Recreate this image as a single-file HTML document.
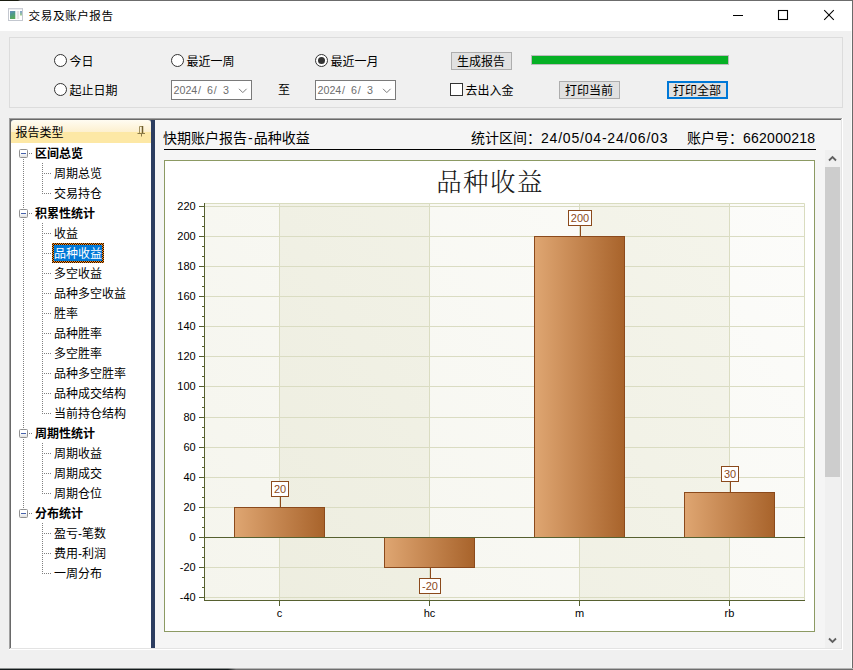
<!DOCTYPE html>
<html lang="zh-CN">
<head>
<meta charset="utf-8">
<title>交易及账户报告</title>
<style>
*{box-sizing:border-box;margin:0;padding:0}
html,body{width:853px;height:670px;overflow:hidden}
body{position:relative;background:#f0f0f0;font-family:"Liberation Sans","Noto Sans CJK SC",sans-serif;font-size:12px;color:#000;line-height:1}
.abs{position:absolute}
.t{position:absolute;white-space:nowrap;line-height:16px;height:16px}
#titlebar{left:0;top:0;width:853px;height:31px;background:#fff}
#topline{left:0;top:0;width:853px;height:1px;background:linear-gradient(90deg,#1a1c10 0,#1a1c10 18px,#6c6c6c 20px,#6c6c6c 100%)}
#rightline{left:852px;top:0;width:1px;height:670px;background:#6a6a6a}
#botline{left:0;top:668px;width:853px;height:2px;background:linear-gradient(90deg,#151b1c 0,#151b1c 228px,#6e6e6e 236px,#6e6e6e 100%)}
#botline::before{content:"";position:absolute;left:0;top:0;width:853px;height:1px;background:rgba(240,240,240,.55)}
#group{left:9px;top:37px;width:834px;height:71px;border:1px solid #dcdcdc}
.radio{position:absolute;width:13px;height:13px;border:1px solid #333;border-radius:50%;background:#fff}
.radio.on::after{content:"";position:absolute;left:2px;top:2px;width:7px;height:7px;border-radius:50%;background:#333}
.date{position:absolute;width:81px;height:20px;border:1px solid #7a7a7a;background:#fff;color:#6d6d6d}
.date i{font-style:normal;margin:0 0.65px}
.btn{position:absolute;height:18px;width:61px;background:#e1e1e1;border:1px solid #adadad;text-align:center;line-height:19px;white-space:nowrap;padding-right:1px;overflow:hidden}
.node{position:absolute;white-space:nowrap;line-height:16px;height:16px}
.b{font-weight:bold}
.box{position:absolute;width:9px;height:9px;border:1px solid #919191;border-radius:1.5px;background:linear-gradient(#fff 0,#fff 45%,#dedede 100%)}
.box::after{content:"";position:absolute;left:1px;top:3px;width:5px;height:1px;background:#4560aa}
.hd{position:absolute;height:1px;background:repeating-linear-gradient(90deg,#808080 0,#808080 1px,transparent 1px,transparent 2px)}
.vd{position:absolute;width:1px;background:repeating-linear-gradient(180deg,#808080 0,#808080 1px,transparent 1px,transparent 2px)}
</style>
</head>
<body>
<!-- title bar -->
<div id="titlebar" class="abs"></div>
<div id="topline" class="abs"></div>
<svg class="abs" style="left:8px;top:8px" width="15" height="13" viewBox="0 0 15 13">
  <defs><linearGradient id="ig" x1="0" y1="0" x2="0.3" y2="1"><stop offset="0" stop-color="#6a8cc4"/><stop offset="0.45" stop-color="#4d9a8c"/><stop offset="1" stop-color="#58a85a"/></linearGradient>
  <linearGradient id="ig2" x1="0" y1="0" x2="0" y2="1"><stop offset="0" stop-color="#7fa0d0"/><stop offset="1" stop-color="#9fd08c"/></linearGradient></defs>
  <rect x="0.5" y="0.5" width="14" height="12" fill="#fff" stroke="#c3c7cf"/>
  <rect x="0.5" y="0.5" width="14" height="1" fill="#d9dce2"/>
  <rect x="2" y="3" width="5.3" height="8" fill="url(#ig)"/>
  <rect x="8.7" y="3" width="2.5" height="8" fill="#e4e4e4"/>
  <rect x="12" y="3" width="2" height="4.5" fill="url(#ig2)"/>
</svg>
<div class="t" style="left:28.6px;top:8px;font-size:11.6px;letter-spacing:0.55px">交易及账户报告</div>
<svg class="abs" style="left:728px;top:5px" width="112" height="20" viewBox="0 0 112 20">
  <path d="M5 10.5H15" stroke="#000" stroke-width="1" fill="none"/>
  <rect x="50.5" y="5.5" width="9" height="9" stroke="#000" stroke-width="1.1" fill="none"/>
  <path d="M96.2 5.2L105.8 14.8M105.8 5.2L96.2 14.8" stroke="#000" stroke-width="1.05" fill="none"/>
</svg>

<!-- options group -->
<div id="group" class="abs"></div>
<div class="radio" style="left:54px;top:54px"></div>
<div class="t" style="left:69.5px;top:54px">今日</div>
<div class="radio" style="left:54px;top:83px"></div>
<div class="t" style="left:69.5px;top:83px">起止日期</div>
<div class="radio" style="left:171px;top:54px"></div>
<div class="t" style="left:186.5px;top:54px">最近一周</div>
<div class="radio on" style="left:315px;top:54px"></div>
<div class="t" style="left:330.5px;top:54px">最近一月</div>

<div class="date" style="left:171px;top:80px"><span class="t" style="left:1.5px;top:1px;white-space:pre;font-size:10.7px;word-spacing:2.6px">2024<i>/</i> 6<i>/</i> 3</span>
  <svg class="abs" style="left:66px;top:7px" width="10" height="6" viewBox="0 0 10 6"><path d="M1 0.8L4.8 4.6L8.6 0.8" stroke="#7a7a7a" stroke-width="1" fill="none"/></svg>
</div>
<div class="t" style="left:278px;top:81.5px">至</div>
<div class="date" style="left:315px;top:80px"><span class="t" style="left:1.5px;top:1px;white-space:pre;font-size:10.7px;word-spacing:2.6px">2024<i>/</i> 6<i>/</i> 3</span>
  <svg class="abs" style="left:66px;top:7px" width="10" height="6" viewBox="0 0 10 6"><path d="M1 0.8L4.8 4.6L8.6 0.8" stroke="#7a7a7a" stroke-width="1" fill="none"/></svg>
</div>

<div class="btn" style="left:451px;top:52px">生成报告</div>
<div class="abs" style="left:531px;top:55px;width:198px;height:10px;background:#06b025;border:1px solid #bcbcbc"></div>
<div class="abs" style="left:450px;top:83px;width:13px;height:13px;background:#fff;border:1px solid #333"></div>
<div class="t" style="left:465.5px;top:83px">去出入金</div>
<div class="btn" style="left:559px;top:81px">打印当前</div>
<div class="btn" style="left:667px;top:81px;border:2px solid #0078d7;line-height:17px">打印全部</div>

<!-- main sunken frame -->
<div class="abs" style="left:9px;top:118px;width:833px;height:1px;background:#a0a0a0"></div>
<div class="abs" style="left:9px;top:118px;width:1px;height:531px;background:#a0a0a0"></div>
<div class="abs" style="left:10px;top:119px;width:831px;height:1px;background:#696969"></div>
<div class="abs" style="left:10px;top:119px;width:1px;height:530px;background:#696969"></div>
<div class="abs" style="left:842px;top:118px;width:1px;height:532px;background:#fff"></div>
<div class="abs" style="left:9px;top:649px;width:834px;height:1px;background:#fff"></div>
<div class="abs" style="left:841px;top:119px;width:1px;height:530px;background:#e3e3e3"></div>
<div class="abs" style="left:10px;top:648px;width:832px;height:1px;background:#e3e3e3"></div>

<!-- left tree panel -->
<div class="abs" style="left:11px;top:120px;width:140px;height:528px;background:#fff"></div>
<div class="abs" style="left:11px;top:120px;width:140px;height:4px;background:#636b7c"></div>
<div class="abs" style="left:11px;top:120px;width:140px;height:23px;border-radius:3px 3px 0 0;background:linear-gradient(#fffcf2 0,#fdf0cf 12px,#fde8a5 12px,#fde8a5 100%)"></div>
<div class="t" style="left:15.5px;top:125px">报告类型</div>
<svg class="abs" style="left:137px;top:125.5px" width="8" height="11" viewBox="0 0 8 11"><path d="M2.5 7V0.5H5.5" stroke="#a39260" stroke-width="1" fill="none"/><path d="M5.5 0V7" stroke="#6f5d2c" stroke-width="1.5" fill="none"/><path d="M0.5 7.5H8M4.5 8V10.5" stroke="#8c7b48" stroke-width="1" fill="none"/></svg>
<div id="tree">
<div class="vd" style="left:23px;top:159px;height:350px"></div>
<div class="box" style="left:19px;top:149px"></div>
<div class="hd" style="left:29px;top:153px;width:3px"></div>
<div class="node b" style="left:35px;top:146px">区间总览</div>
<div class="vd" style="left:42px;top:163px;height:31px"></div>
<div class="hd" style="left:42px;top:173px;width:9px"></div>
<div class="node" style="left:54px;top:166px">周期总览</div>
<div class="hd" style="left:42px;top:193px;width:9px"></div>
<div class="node" style="left:54px;top:186px">交易持仓</div>
<div class="box" style="left:19px;top:209px"></div>
<div class="hd" style="left:29px;top:213px;width:3px"></div>
<div class="node b" style="left:35px;top:206px">积累性统计</div>
<div class="vd" style="left:42px;top:223px;height:191px"></div>
<div class="hd" style="left:42px;top:233px;width:9px"></div>
<div class="node" style="left:54px;top:226px">收益</div>
<div class="hd" style="left:42px;top:253px;width:9px"></div>
<div class="abs" style="left:52px;top:243px;width:52px;height:20px;background:repeating-conic-gradient(#1a1208 0 25%,#ff8a1c 0 50%) 0 0/2px 2px"></div>
<div class="abs" style="left:54px;top:245px;width:48px;height:16px;background:#0078d7"></div>
<div class="node" style="left:54px;top:246px;color:#fff">品种收益</div>
<div class="hd" style="left:42px;top:273px;width:9px"></div>
<div class="node" style="left:54px;top:266px">多空收益</div>
<div class="hd" style="left:42px;top:293px;width:9px"></div>
<div class="node" style="left:54px;top:286px">品种多空收益</div>
<div class="hd" style="left:42px;top:313px;width:9px"></div>
<div class="node" style="left:54px;top:306px">胜率</div>
<div class="hd" style="left:42px;top:333px;width:9px"></div>
<div class="node" style="left:54px;top:326px">品种胜率</div>
<div class="hd" style="left:42px;top:353px;width:9px"></div>
<div class="node" style="left:54px;top:346px">多空胜率</div>
<div class="hd" style="left:42px;top:373px;width:9px"></div>
<div class="node" style="left:54px;top:366px">品种多空胜率</div>
<div class="hd" style="left:42px;top:393px;width:9px"></div>
<div class="node" style="left:54px;top:386px">品种成交结构</div>
<div class="hd" style="left:42px;top:413px;width:9px"></div>
<div class="node" style="left:54px;top:406px">当前持仓结构</div>
<div class="box" style="left:19px;top:429px"></div>
<div class="hd" style="left:29px;top:433px;width:3px"></div>
<div class="node b" style="left:35px;top:426px">周期性统计</div>
<div class="vd" style="left:42px;top:443px;height:51px"></div>
<div class="hd" style="left:42px;top:453px;width:9px"></div>
<div class="node" style="left:54px;top:446px">周期收益</div>
<div class="hd" style="left:42px;top:473px;width:9px"></div>
<div class="node" style="left:54px;top:466px">周期成交</div>
<div class="hd" style="left:42px;top:493px;width:9px"></div>
<div class="node" style="left:54px;top:486px">周期仓位</div>
<div class="box" style="left:19px;top:509px"></div>
<div class="hd" style="left:29px;top:513px;width:3px"></div>
<div class="node b" style="left:35px;top:506px">分布统计</div>
<div class="vd" style="left:42px;top:523px;height:51px"></div>
<div class="hd" style="left:42px;top:533px;width:9px"></div>
<div class="node" style="left:54px;top:526px">盈亏-笔数</div>
<div class="hd" style="left:42px;top:553px;width:9px"></div>
<div class="node" style="left:54px;top:546px">费用-利润</div>
<div class="hd" style="left:42px;top:573px;width:9px"></div>
<div class="node" style="left:54px;top:566px">一周分布</div>
</div><!--/tree-->

<!-- splitter -->
<div class="abs" style="left:151px;top:120px;width:4px;height:528px;background:#2c3d60"></div>

<!-- right panel -->
<div class="abs" style="left:155px;top:120px;width:686px;height:528px;background:#f5f5f5"></div>
<div class="t" style="left:163px;top:130px;font-size:14px">快期账户报告<span style="margin:0 1px">-</span>品种收益</div>
<div class="t" style="left:471px;top:130px;font-size:14px">统计区间：<span style="letter-spacing:0.8px">24/05/04-24/06/03</span></div>
<div class="t" style="left:687px;top:130px;font-size:14px">账户号：<span style="letter-spacing:0.25px">662000218</span></div>
<div class="abs" style="left:164px;top:149px;width:652px;height:1px;background:#000"></div>

<!-- scrollbar -->
<div class="abs" style="left:825px;top:150px;width:16px;height:498px;background:#f0f0f0"></div>
<div class="abs" style="left:825px;top:167px;width:15px;height:310px;background:#cdcdcd"></div>
<svg class="abs" style="left:828px;top:155px" width="9" height="7" viewBox="0 0 9 7"><path d="M1 5.5L4.5 2L8 5.5" stroke="#606060" stroke-width="1.8" fill="none"/></svg>
<svg class="abs" style="left:828px;top:637px" width="9" height="7" viewBox="0 0 9 7"><path d="M1 1.5L4.5 5L8 1.5" stroke="#606060" stroke-width="1.8" fill="none"/></svg>

<!-- chart -->
<svg class="abs" style="left:164px;top:160px" width="651" height="472" viewBox="164 160 651 472" font-family="'Liberation Sans',sans-serif" font-size="11">
  <defs>
    <linearGradient id="bar" x1="0" y1="0" x2="1" y2="0"><stop offset="0" stop-color="#dfa672"/><stop offset="1" stop-color="#a8632b"/></linearGradient>
    <linearGradient id="bg1" gradientUnits="userSpaceOnUse" x1="204" y1="600" x2="805" y2="203"><stop offset="0" stop-color="#f5f5ed"/><stop offset="1" stop-color="#fcfcfa"/></linearGradient>
    <linearGradient id="bg2" gradientUnits="userSpaceOnUse" x1="204" y1="600" x2="805" y2="203"><stop offset="0" stop-color="#ededdf"/><stop offset="1" stop-color="#f5f5ec"/></linearGradient>
  </defs>
  <rect x="164.5" y="160.5" width="650" height="471" fill="#fff" stroke="#8c9a63"/>
  <text x="490" y="191" text-anchor="middle" font-family="'Liberation Serif','Noto Serif CJK SC',serif" font-size="25.5" font-weight="300" letter-spacing="1.4" fill="#1a1a1a">品种收益</text>
  <g id="plot">
<rect x="204" y="203" width="75" height="397" fill="url(#bg1)"/>
<rect x="279" y="203" width="150" height="397" fill="url(#bg2)"/>
<rect x="429" y="203" width="150" height="397" fill="url(#bg1)"/>
<rect x="579" y="203" width="150" height="397" fill="url(#bg2)"/>
<rect x="729" y="203" width="76" height="397" fill="url(#bg1)"/>
<path d="M204 203.5H804.5V600" stroke="#d9dcbf" fill="none"/>
<path d="M204 597.5H805" stroke="#dadcc2"/>
<path d="M204 567.5H805" stroke="#dadcc2"/>
<path d="M204 507.5H805" stroke="#dadcc2"/>
<path d="M204 477.5H805" stroke="#dadcc2"/>
<path d="M204 447.5H805" stroke="#dadcc2"/>
<path d="M204 417.5H805" stroke="#dadcc2"/>
<path d="M204 386.5H805" stroke="#dadcc2"/>
<path d="M204 356.5H805" stroke="#dadcc2"/>
<path d="M204 326.5H805" stroke="#dadcc2"/>
<path d="M204 296.5H805" stroke="#dadcc2"/>
<path d="M204 266.5H805" stroke="#dadcc2"/>
<path d="M204 236.5H805" stroke="#dadcc2"/>
<path d="M204 206.5H805" stroke="#dadcc2"/>
<path d="M279.5 203V600" stroke="#dadcc2"/>
<path d="M429.5 203V600" stroke="#dadcc2"/>
<path d="M579.5 203V600" stroke="#dadcc2"/>
<path d="M729.5 203V600" stroke="#dadcc2"/>
<rect x="234.5" y="507.5" width="90" height="30" fill="url(#bar)" stroke="#8b4a1c"/>
<rect x="384.5" y="537.5" width="90" height="30" fill="url(#bar)" stroke="#8b4a1c"/>
<rect x="534.5" y="236.5" width="90" height="301" fill="url(#bar)" stroke="#8b4a1c"/>
<rect x="684.5" y="492.5" width="90" height="45" fill="url(#bar)" stroke="#8b4a1c"/>
<path d="M204 537.5H805" stroke="#56602f"/>
<path d="M280.5 507V497" stroke="#8b4a1c"/>
<rect x="271.5" y="481.5" width="17" height="15" fill="#fff" stroke="#8b4a1c"/>
<text x="280" y="493" text-anchor="middle" fill="#8b4a1c">20</text>
<path d="M430.5 567V578" stroke="#8b4a1c"/>
<rect x="419.5" y="578.5" width="21" height="15" fill="#fff" stroke="#8b4a1c"/>
<text x="430" y="590" text-anchor="middle" fill="#8b4a1c">-20</text>
<path d="M580.5 236V226" stroke="#8b4a1c"/>
<rect x="568.5" y="210.5" width="23" height="15" fill="#fff" stroke="#8b4a1c"/>
<text x="580" y="222" text-anchor="middle" fill="#8b4a1c">200</text>
<path d="M730.5 492V482" stroke="#8b4a1c"/>
<rect x="721.5" y="466.5" width="17" height="15" fill="#fff" stroke="#8b4a1c"/>
<text x="730" y="478" text-anchor="middle" fill="#8b4a1c">30</text>
<path d="M204.5 203V601M204 600.5H805" stroke="#56602f" fill="none"/>
<path d="M199 597.5H204" stroke="#56602f"/>
<text x="195.7" y="601.0" text-anchor="end" fill="#000">-40</text>
<path d="M202 587.5H204" stroke="#56602f"/>
<path d="M202 577.5H204" stroke="#56602f"/>
<path d="M199 567.5H204" stroke="#56602f"/>
<text x="195.7" y="571.0" text-anchor="end" fill="#000">-20</text>
<path d="M202 557.5H204" stroke="#56602f"/>
<path d="M202 547.5H204" stroke="#56602f"/>
<path d="M199 537.5H204" stroke="#56602f"/>
<text x="195.7" y="541.0" text-anchor="end" fill="#000">0</text>
<path d="M202 527.5H204" stroke="#56602f"/>
<path d="M202 517.5H204" stroke="#56602f"/>
<path d="M199 507.5H204" stroke="#56602f"/>
<text x="195.7" y="511.0" text-anchor="end" fill="#000">20</text>
<path d="M202 497.5H204" stroke="#56602f"/>
<path d="M202 487.5H204" stroke="#56602f"/>
<path d="M199 477.5H204" stroke="#56602f"/>
<text x="195.7" y="481.0" text-anchor="end" fill="#000">40</text>
<path d="M202 467.5H204" stroke="#56602f"/>
<path d="M202 457.5H204" stroke="#56602f"/>
<path d="M199 447.5H204" stroke="#56602f"/>
<text x="195.7" y="451.0" text-anchor="end" fill="#000">60</text>
<path d="M202 437.5H204" stroke="#56602f"/>
<path d="M202 427.5H204" stroke="#56602f"/>
<path d="M199 417.5H204" stroke="#56602f"/>
<text x="195.7" y="421.0" text-anchor="end" fill="#000">80</text>
<path d="M202 407.5H204" stroke="#56602f"/>
<path d="M202 397.5H204" stroke="#56602f"/>
<path d="M199 386.5H204" stroke="#56602f"/>
<text x="195.7" y="390.0" text-anchor="end" fill="#000">100</text>
<path d="M202 376.5H204" stroke="#56602f"/>
<path d="M202 366.5H204" stroke="#56602f"/>
<path d="M199 356.5H204" stroke="#56602f"/>
<text x="195.7" y="360.0" text-anchor="end" fill="#000">120</text>
<path d="M202 346.5H204" stroke="#56602f"/>
<path d="M202 336.5H204" stroke="#56602f"/>
<path d="M199 326.5H204" stroke="#56602f"/>
<text x="195.7" y="330.0" text-anchor="end" fill="#000">140</text>
<path d="M202 316.5H204" stroke="#56602f"/>
<path d="M202 306.5H204" stroke="#56602f"/>
<path d="M199 296.5H204" stroke="#56602f"/>
<text x="195.7" y="300.0" text-anchor="end" fill="#000">160</text>
<path d="M202 286.5H204" stroke="#56602f"/>
<path d="M202 276.5H204" stroke="#56602f"/>
<path d="M199 266.5H204" stroke="#56602f"/>
<text x="195.7" y="270.0" text-anchor="end" fill="#000">180</text>
<path d="M202 256.5H204" stroke="#56602f"/>
<path d="M202 246.5H204" stroke="#56602f"/>
<path d="M199 236.5H204" stroke="#56602f"/>
<text x="195.7" y="240.0" text-anchor="end" fill="#000">200</text>
<path d="M202 226.5H204" stroke="#56602f"/>
<path d="M202 216.5H204" stroke="#56602f"/>
<path d="M199 206.5H204" stroke="#56602f"/>
<text x="195.7" y="210.0" text-anchor="end" fill="#000">220</text>
<path d="M279.5 600V606" stroke="#56602f"/>
<text x="279.5" y="616.7" text-anchor="middle" fill="#000">c</text>
<path d="M429.5 600V606" stroke="#56602f"/>
<text x="429.5" y="616.7" text-anchor="middle" fill="#000">hc</text>
<path d="M579.5 600V606" stroke="#56602f"/>
<text x="579.5" y="616.7" text-anchor="middle" fill="#000">m</text>
<path d="M729.5 600V606" stroke="#56602f"/>
<text x="729.5" y="616.7" text-anchor="middle" fill="#000">rb</text>
</g><!--/plot-->
</svg>

<div class="abs" style="left:851px;top:31px;width:1px;height:637px;background:#fafafa"></div>
<div id="rightline" class="abs"></div>
<div id="botline" class="abs"></div>
</body>
</html>
